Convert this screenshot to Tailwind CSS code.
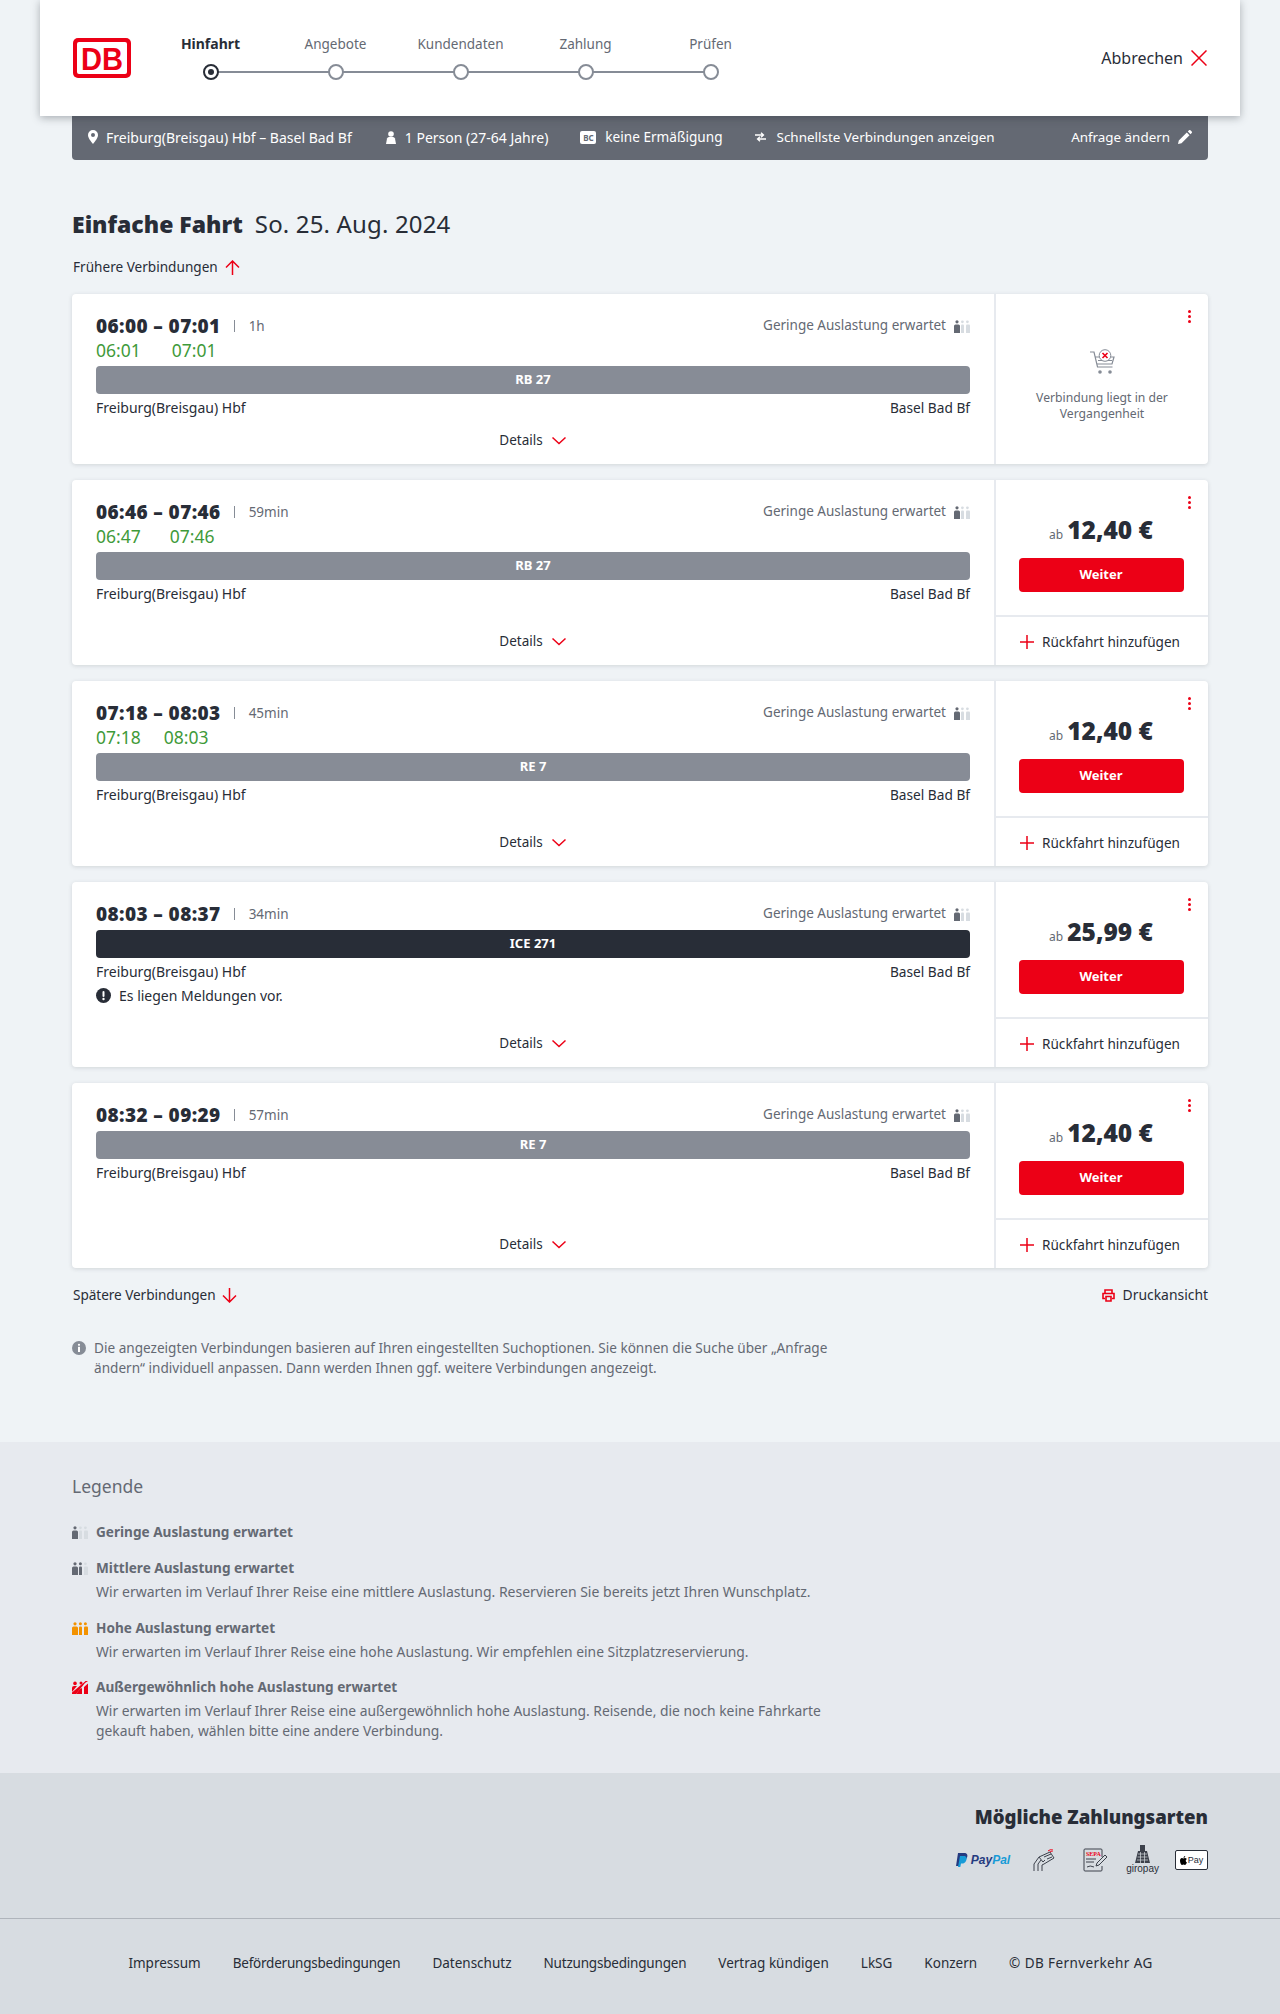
<!DOCTYPE html>
<html lang="de">
<head>
  <meta charset="UTF-8" />
  <title>Verbindungen</title>
  <script src="https://cdn.jsdelivr.net/npm/@tailwindcss/browser@4"></script>
</head>
<body class="bg-[#eff3f6] font-['Noto_Sans',sans-serif] text-[#282d37] text-[14px]">
  <!-- shared icons -->
  <svg class="hidden">
    <symbol id="occ1" viewBox="0 0 16 13"><circle cx="3" cy="1.8" r="1.6" fill="#646973"/><path d="M0 6a1.5 1.5 0 0 1 1.5-1.5h3A1.5 1.5 0 0 1 6 6v7H0z" fill="#646973"/><circle cx="8.4" cy="1.8" r="1.4" fill="#d7dce1"/><path d="M7 5.5a1 1 0 0 1 1-1h1a1 1 0 0 1 1 1V13H7z" fill="#d7dce1"/><circle cx="13.4" cy="1.8" r="1.4" fill="#d7dce1"/><path d="M12 5.5a1 1 0 0 1 1-1h2a1 1 0 0 1 1 1V13h-4z" fill="#d7dce1"/></symbol>
    <symbol id="occ2" viewBox="0 0 16 13"><circle cx="3" cy="1.8" r="1.6" fill="#646973"/><path d="M0 6a1.5 1.5 0 0 1 1.5-1.5h3A1.5 1.5 0 0 1 6 6v7H0z" fill="#646973"/><circle cx="8.4" cy="1.8" r="1.5" fill="#646973"/><path d="M7 5.5a1 1 0 0 1 1-1h1a1 1 0 0 1 1 1V13H7z" fill="#646973"/><circle cx="13.4" cy="1.8" r="1.4" fill="#d7dce1"/><path d="M12 5.5a1 1 0 0 1 1-1h2a1 1 0 0 1 1 1V13h-4z" fill="#d7dce1"/></symbol>
    <symbol id="occ3" viewBox="0 0 16 13"><g fill="#f39200"><circle cx="3" cy="1.8" r="1.6"/><path d="M0 6a1.5 1.5 0 0 1 1.5-1.5h3A1.5 1.5 0 0 1 6 6v7H0z"/><circle cx="8.4" cy="1.8" r="1.5"/><path d="M7 5.5a1 1 0 0 1 1-1h1a1 1 0 0 1 1 1V13H7z"/><circle cx="13.4" cy="1.8" r="1.5"/><path d="M12 5.5a1 1 0 0 1 1-1h2a1 1 0 0 1 1 1V13h-4z"/></g></symbol>
    <symbol id="occ4" viewBox="0 0 16 13"><g fill="#ec0016"><circle cx="3" cy="2.4" r="1.8"/><path d="M0 7a2 2 0 0 1 2-2h3L0 11z"/><path d="M0 13l4-.1 9-10.900 3-2-2.500 .1-1 .9L0 11.500z"/><circle cx="9" cy="2" r="1.500"/><path d="M4 13l4-5 2-1v6zM12 6l4-3.500V13h-4z"/></g></symbol>
    <symbol id="chev" viewBox="0 0 16 9"><path d="M1.500 1.500 8 7.500l6.500-6" fill="none" stroke="#ec0016" stroke-width="1.500"/></symbol>
    <symbol id="plus" viewBox="0 0 14 14"><path d="M7 0v14M0 7h14" stroke="#ec0016" stroke-width="1.500"/></symbol>
  </svg>

  <!-- header -->
  <header class="relative z-10 mx-[40px] h-[116px] bg-white shadow-[0_2px_8px_rgba(40,45,55,0.35)] flex items-center pl-[33px] pr-[33px]">
    <svg class="w-[58px] h-[40px] shrink-0" viewBox="0 0 58 40">
      <rect width="58" height="40" rx="5" fill="#ec0016"/>
      <rect x="4" y="4" width="50" height="32" rx="2" fill="#fff"/>
      <text x="29" y="31.500" text-anchor="middle" font-family="Liberation Sans" font-weight="700" font-size="32" fill="#ec0016" textLength="42" lengthAdjust="spacingAndGlyphs">DB</text>
    </svg>
    <div class="relative ml-[17px] w-[625px] h-[50px] flex text-[13.5px]">
      <div class="absolute left-[62px] right-[62px] top-[38px] h-[2px] bg-[#868c96]"></div>
      <div class="w-[125px] flex flex-col items-center pt-px gap-[10px] relative">
        <span class="h-[20px] leading-[20px] text-[14px] font-bold">Hinfahrt</span>
        <span class="w-[16px] h-[16px] rounded-full border-2 border-[#282d37] bg-white flex items-center justify-center"><span class="w-[6px] h-[6px] rounded-full bg-[#282d37]"></span></span>
      </div>
      <div class="w-[125px] flex flex-col items-center pt-px gap-[10px] relative text-[#646973]">
        <span class="h-[20px] leading-[20px]">Angebote</span>
        <span class="w-[16px] h-[16px] rounded-full border-2 border-[#868c96] bg-white"></span>
      </div>
      <div class="w-[125px] flex flex-col items-center pt-px gap-[10px] relative text-[#646973]">
        <span class="h-[20px] leading-[20px]">Kundendaten</span>
        <span class="w-[16px] h-[16px] rounded-full border-2 border-[#868c96] bg-white"></span>
      </div>
      <div class="w-[125px] flex flex-col items-center pt-px gap-[10px] relative text-[#646973]">
        <span class="h-[20px] leading-[20px]">Zahlung</span>
        <span class="w-[16px] h-[16px] rounded-full border-2 border-[#868c96] bg-white"></span>
      </div>
      <div class="w-[125px] flex flex-col items-center pt-px gap-[10px] relative text-[#646973]">
        <span class="h-[20px] leading-[20px]">Prüfen</span>
        <span class="w-[16px] h-[16px] rounded-full border-2 border-[#868c96] bg-white"></span>
      </div>
    </div>
    <div class="ml-auto flex items-center gap-[8px] text-[16px]">
      <span>Abbrechen</span>
      <svg class="w-[16px] h-[16px]" viewBox="0 0 16 16"><path d="M.5.500l15 15M15.500.500l-15 15" stroke="#ec0016" stroke-width="1.500"/></svg>
    </div>
  </header>

  <main class="px-[72px]">
    <!-- search summary -->
    <div class="h-[44px] pb-[2px] bg-[#646973] rounded-b-[4px] text-white flex items-center pl-[16px] pr-[16px]">
      <svg class="w-[10px] h-[14px] mr-[8px]" viewBox="0 0 10 14"><path fill-rule="evenodd" d="M5 0a5 5 0 0 1 5 5c0 3-3 6.500-5 9-2-2.500-5-6-5-9a5 5 0 0 1 5-5zm0 3a2 2 0 1 0 0 4 2 2 0 0 0 0-4z" fill="#fff"/></svg>
      <span>Freiburg(Breisgau) Hbf – Basel Bad Bf</span>
      <svg class="w-[12px] h-[13px] ml-[33px] mr-[8px]" viewBox="0 0 12 13"><circle cx="6" cy="3" r="2.800" fill="#fff"/><path d="M1 13l1-5.500Q2.500 6 4 6h4q1.500 0 2 1.500l1 5.500z" fill="#fff"/></svg>
      <span>1 Person (27-64 Jahre)</span>
      <span class="ml-[32px] mr-[9px] w-[16px] h-[13px] bg-white rounded-[2px] text-[#646973] text-[8px] font-bold leading-[13px] text-center">BC</span>
      <span class="text-[13.6px]">keine Ermäßigung</span>
      <svg class="w-[11px] h-[10px] ml-[32px] mr-[11px]" viewBox="0 0 11 10"><path d="M0 3h8M6 .8 8.500 3 6 5.200M11 7H3M5 4.800 2.500 7 5 9.200" fill="none" stroke="#fff" stroke-width="1.300"/></svg>
      <span class="text-[13.45px]">Schnellste Verbindungen anzeigen</span>
      <span class="ml-auto text-[13.4px]">Anfrage ändern</span>
      <svg class="w-[14px] h-[14px] ml-[8px]" viewBox="0 0 14 14"><path d="M0 14l.8-3.500 8-8 2.700 2.700-8 8zM9.800 1.500 11 .3a1 1 0 0 1 1.400 0l1.300 1.300a1 1 0 0 1 0 1.400l-1.200 1.200z" fill="#fff"/></svg>
    </div>

    <h1 class="mt-[48px] h-[32px] leading-[32px] text-[24px]"><span class="font-black text-[23px]">Einfache Fahrt</span><span class="ml-[12px] tracking-[0.15px]">So. 25. Aug. 2024</span></h1>

    <div class="mt-[17px] h-[20px] flex items-center gap-[7px] pl-px text-[13.6px]">
      <span>Frühere Verbindungen</span>
      <svg class="w-[15px] h-[15px]" viewBox="0 0 15 15"><path d="M7.500 15V1M1 7.500 7.500 1 14 7.500" fill="none" stroke="#ec0016" stroke-width="1.500"/></svg>
    </div>

    <div class="mt-[17px] flex flex-col gap-[16px]">
      <!-- card 1 -->
      <article class="relative h-[170px] bg-white rounded-[4px] shadow-[0_1px_4px_rgba(40,45,55,0.15)] flex">
        <div class="flex-1 flex flex-col px-[24px] pt-[20px]">
          <div class="flex items-center h-[24px]">
            <span class="font-black text-[19px] tracking-[0.4px]">06:00 – 07:01</span>
            <span class="ml-[13px] w-px h-[12px] bg-[#868c96]"></span>
            <span class="ml-[14px] text-[#646973] text-[13.5px]">1h</span>
            <span class="ml-auto pb-[1px] text-[#646973] text-[13.5px]">Geringe Auslastung erwartet</span>
            <svg class="w-[16px] h-[13px] ml-[8px]"><use href="#occ1"/></svg>
          </div>
          <div class="h-[24px] leading-[24px] text-[17.5px] text-[#3f9a3a] flex"><span>06:01</span><span class="ml-[31px]">07:01</span></div>
          <div class="mt-[4px] h-[28px] rounded-[4px] bg-[#878c96] text-white text-[13px] font-bold flex items-center justify-center">RB 27</div>
          <div class="mt-[4px] h-[20px] leading-[20px] flex justify-between"><span>Freiburg(Breisgau) Hbf</span><span class="text-[13.7px]">Basel Bad Bf</span></div>
          <div class="mt-auto h-[46px] pb-[1px] flex items-center justify-center gap-[8px] text-[13.5px]"><span>Details</span><svg class="w-[16px] h-[9px]"><use href="#chev"/></svg></div>
        </div>
        <div class="w-[214px] border-l-2 border-[#e7eaef] flex flex-col items-center pt-[55px] text-center text-[#646973] text-[12.2px] leading-[16px]">
          <svg class="w-[26px] h-[26px] mb-[15px]" viewBox="0 0 26 26">
            <path d="M1 3h4l3.500 15h15" fill="none" stroke="#868c96" stroke-width="1.200"/>
            <path d="M6 8h19l-2 7H8M9 11.500h14" fill="none" stroke="#868c96" stroke-width="1.200"/>
            <circle cx="11" cy="23" r="1.800" fill="#868c96"/><circle cx="21" cy="23" r="1.800" fill="#868c96"/>
            <circle cx="16" cy="6.500" r="5.800" fill="#fff" stroke="#868c96"/>
            <path d="M13.500 4l5 5M18.500 4l-5 5" stroke="#ec0016" stroke-width="1.600"/>
          </svg>
          <span>Verbindung liegt in der<br>Vergangenheit</span>
        </div>
        <div class="absolute right-[17px] top-[16px] flex flex-col gap-[2px]"><i class="w-[3px] h-[3px] rounded-full bg-[#ec0016]"></i><i class="w-[3px] h-[3px] rounded-full bg-[#ec0016]"></i><i class="w-[3px] h-[3px] rounded-full bg-[#ec0016]"></i></div>
      </article>

      <!-- card 2 -->
      <article class="relative h-[185px] bg-white rounded-[4px] shadow-[0_1px_4px_rgba(40,45,55,0.15)] flex">
        <div class="flex-1 flex flex-col px-[24px] pt-[20px]">
          <div class="flex items-center h-[24px]">
            <span class="font-black text-[19px] tracking-[0.4px]">06:46 – 07:46</span>
            <span class="ml-[13px] w-px h-[12px] bg-[#868c96]"></span>
            <span class="ml-[14px] text-[#646973] text-[13.5px]">59min</span>
            <span class="ml-auto pb-[1px] text-[#646973] text-[13.5px]">Geringe Auslastung erwartet</span>
            <svg class="w-[16px] h-[13px] ml-[8px]"><use href="#occ1"/></svg>
          </div>
          <div class="h-[24px] leading-[24px] text-[17.5px] text-[#3f9a3a] flex"><span>06:47</span><span class="ml-[29px]">07:46</span></div>
          <div class="mt-[4px] h-[28px] rounded-[4px] bg-[#878c96] text-white text-[13px] font-bold flex items-center justify-center">RB 27</div>
          <div class="mt-[4px] h-[20px] leading-[20px] flex justify-between"><span>Freiburg(Breisgau) Hbf</span><span class="text-[13.7px]">Basel Bad Bf</span></div>
          <div class="mt-auto h-[46px] pb-[1px] flex items-center justify-center gap-[8px] text-[13.5px]"><span>Details</span><svg class="w-[16px] h-[9px]"><use href="#chev"/></svg></div>
        </div>
        <div class="w-[214px] border-l-2 border-[#e7eaef] flex flex-col">
          <div class="h-[137px] pr-[2px] border-b-2 border-[#e7eaef] flex flex-col items-center pt-[32px]">
            <div class="h-[36px] flex items-baseline gap-[4px]"><span class="text-[12px] text-[#646973]">ab</span><span class="font-black text-[24.500px] leading-[36px]">12,40 €</span></div>
            <div class="mt-[10px] w-[165px] h-[34px] rounded-[4px] bg-[#ec0016] text-white text-[13px] font-bold flex items-center justify-center">Weiter</div>
          </div>
          <div class="flex-1 flex items-center pl-[24px] pt-[2px] gap-[8px] text-[13.6px]"><svg class="w-[14px] h-[14px]"><use href="#plus"/></svg><span>Rückfahrt hinzufügen</span></div>
        </div>
        <div class="absolute right-[17px] top-[16px] flex flex-col gap-[2px]"><i class="w-[3px] h-[3px] rounded-full bg-[#ec0016]"></i><i class="w-[3px] h-[3px] rounded-full bg-[#ec0016]"></i><i class="w-[3px] h-[3px] rounded-full bg-[#ec0016]"></i></div>
      </article>

      <!-- card 3 -->
      <article class="relative h-[185px] bg-white rounded-[4px] shadow-[0_1px_4px_rgba(40,45,55,0.15)] flex">
        <div class="flex-1 flex flex-col px-[24px] pt-[20px]">
          <div class="flex items-center h-[24px]">
            <span class="font-black text-[19px] tracking-[0.4px]">07:18 – 08:03</span>
            <span class="ml-[13px] w-px h-[12px] bg-[#868c96]"></span>
            <span class="ml-[14px] text-[#646973] text-[13.5px]">45min</span>
            <span class="ml-auto pb-[1px] text-[#646973] text-[13.5px]">Geringe Auslastung erwartet</span>
            <svg class="w-[16px] h-[13px] ml-[8px]"><use href="#occ1"/></svg>
          </div>
          <div class="h-[24px] leading-[24px] text-[17.5px] text-[#3f9a3a] flex"><span>07:18</span><span class="ml-[23px]">08:03</span></div>
          <div class="mt-[4px] h-[28px] rounded-[4px] bg-[#878c96] text-white text-[13px] font-bold flex items-center justify-center">RE 7</div>
          <div class="mt-[4px] h-[20px] leading-[20px] flex justify-between"><span>Freiburg(Breisgau) Hbf</span><span class="text-[13.7px]">Basel Bad Bf</span></div>
          <div class="mt-auto h-[46px] pb-[1px] flex items-center justify-center gap-[8px] text-[13.5px]"><span>Details</span><svg class="w-[16px] h-[9px]"><use href="#chev"/></svg></div>
        </div>
        <div class="w-[214px] border-l-2 border-[#e7eaef] flex flex-col">
          <div class="h-[137px] pr-[2px] border-b-2 border-[#e7eaef] flex flex-col items-center pt-[32px]">
            <div class="h-[36px] flex items-baseline gap-[4px]"><span class="text-[12px] text-[#646973]">ab</span><span class="font-black text-[24.500px] leading-[36px]">12,40 €</span></div>
            <div class="mt-[10px] w-[165px] h-[34px] rounded-[4px] bg-[#ec0016] text-white text-[13px] font-bold flex items-center justify-center">Weiter</div>
          </div>
          <div class="flex-1 flex items-center pl-[24px] pt-[2px] gap-[8px] text-[13.6px]"><svg class="w-[14px] h-[14px]"><use href="#plus"/></svg><span>Rückfahrt hinzufügen</span></div>
        </div>
        <div class="absolute right-[17px] top-[16px] flex flex-col gap-[2px]"><i class="w-[3px] h-[3px] rounded-full bg-[#ec0016]"></i><i class="w-[3px] h-[3px] rounded-full bg-[#ec0016]"></i><i class="w-[3px] h-[3px] rounded-full bg-[#ec0016]"></i></div>
      </article>

      <!-- card 4 -->
      <article class="relative h-[185px] bg-white rounded-[4px] shadow-[0_1px_4px_rgba(40,45,55,0.15)] flex">
        <div class="flex-1 flex flex-col px-[24px] pt-[20px]">
          <div class="flex items-center h-[24px]">
            <span class="font-black text-[19px] tracking-[0.4px]">08:03 – 08:37</span>
            <span class="ml-[13px] w-px h-[12px] bg-[#868c96]"></span>
            <span class="ml-[14px] text-[#646973] text-[13.5px]">34min</span>
            <span class="ml-auto pb-[1px] text-[#646973] text-[13.5px]">Geringe Auslastung erwartet</span>
            <svg class="w-[16px] h-[13px] ml-[8px]"><use href="#occ1"/></svg>
          </div>
          <div class="mt-[4px] h-[28px] rounded-[4px] bg-[#282d37] text-white text-[13px] font-bold flex items-center justify-center">ICE 271</div>
          <div class="mt-[4px] h-[20px] leading-[20px] flex justify-between"><span>Freiburg(Breisgau) Hbf</span><span class="text-[13.7px]">Basel Bad Bf</span></div>
          <div class="mt-[3px] h-[20px] flex items-center gap-[8px]">
            <svg class="w-[15px] h-[15px]" viewBox="0 0 15 15"><circle cx="7.500" cy="7.500" r="7.500" fill="#282d37"/><rect x="6.500" y="3" width="2" height="6" rx="1" fill="#fff"/><circle cx="7.500" cy="11" r="1.200" fill="#fff"/></svg>
            <span>Es liegen Meldungen vor.</span>
          </div>
          <div class="mt-auto h-[46px] pb-[1px] flex items-center justify-center gap-[8px] text-[13.5px]"><span>Details</span><svg class="w-[16px] h-[9px]"><use href="#chev"/></svg></div>
        </div>
        <div class="w-[214px] border-l-2 border-[#e7eaef] flex flex-col">
          <div class="h-[137px] pr-[2px] border-b-2 border-[#e7eaef] flex flex-col items-center pt-[32px]">
            <div class="h-[36px] flex items-baseline gap-[4px]"><span class="text-[12px] text-[#646973]">ab</span><span class="font-black text-[24.500px] leading-[36px]">25,99 €</span></div>
            <div class="mt-[10px] w-[165px] h-[34px] rounded-[4px] bg-[#ec0016] text-white text-[13px] font-bold flex items-center justify-center">Weiter</div>
          </div>
          <div class="flex-1 flex items-center pl-[24px] pt-[2px] gap-[8px] text-[13.6px]"><svg class="w-[14px] h-[14px]"><use href="#plus"/></svg><span>Rückfahrt hinzufügen</span></div>
        </div>
        <div class="absolute right-[17px] top-[16px] flex flex-col gap-[2px]"><i class="w-[3px] h-[3px] rounded-full bg-[#ec0016]"></i><i class="w-[3px] h-[3px] rounded-full bg-[#ec0016]"></i><i class="w-[3px] h-[3px] rounded-full bg-[#ec0016]"></i></div>
      </article>

      <!-- card 5 -->
      <article class="relative h-[185px] bg-white rounded-[4px] shadow-[0_1px_4px_rgba(40,45,55,0.15)] flex">
        <div class="flex-1 flex flex-col px-[24px] pt-[20px]">
          <div class="flex items-center h-[24px]">
            <span class="font-black text-[19px] tracking-[0.4px]">08:32 – 09:29</span>
            <span class="ml-[13px] w-px h-[12px] bg-[#868c96]"></span>
            <span class="ml-[14px] text-[#646973] text-[13.5px]">57min</span>
            <span class="ml-auto pb-[1px] text-[#646973] text-[13.5px]">Geringe Auslastung erwartet</span>
            <svg class="w-[16px] h-[13px] ml-[8px]"><use href="#occ1"/></svg>
          </div>
          <div class="mt-[4px] h-[28px] rounded-[4px] bg-[#878c96] text-white text-[13px] font-bold flex items-center justify-center">RE 7</div>
          <div class="mt-[4px] h-[20px] leading-[20px] flex justify-between"><span>Freiburg(Breisgau) Hbf</span><span class="text-[13.7px]">Basel Bad Bf</span></div>
          <div class="mt-auto h-[46px] pb-[1px] flex items-center justify-center gap-[8px] text-[13.5px]"><span>Details</span><svg class="w-[16px] h-[9px]"><use href="#chev"/></svg></div>
        </div>
        <div class="w-[214px] border-l-2 border-[#e7eaef] flex flex-col">
          <div class="h-[137px] pr-[2px] border-b-2 border-[#e7eaef] flex flex-col items-center pt-[32px]">
            <div class="h-[36px] flex items-baseline gap-[4px]"><span class="text-[12px] text-[#646973]">ab</span><span class="font-black text-[24.500px] leading-[36px]">12,40 €</span></div>
            <div class="mt-[10px] w-[165px] h-[34px] rounded-[4px] bg-[#ec0016] text-white text-[13px] font-bold flex items-center justify-center">Weiter</div>
          </div>
          <div class="flex-1 flex items-center pl-[24px] pt-[2px] gap-[8px] text-[13.6px]"><svg class="w-[14px] h-[14px]"><use href="#plus"/></svg><span>Rückfahrt hinzufügen</span></div>
        </div>
        <div class="absolute right-[17px] top-[16px] flex flex-col gap-[2px]"><i class="w-[3px] h-[3px] rounded-full bg-[#ec0016]"></i><i class="w-[3px] h-[3px] rounded-full bg-[#ec0016]"></i><i class="w-[3px] h-[3px] rounded-full bg-[#ec0016]"></i></div>
      </article>
    </div>

    <div class="mt-[17px] h-[20px] flex items-center pl-px text-[13.6px]">
      <span class="tracking-[-0.05px]">Spätere Verbindungen</span>
      <svg class="ml-[6px] w-[15px] h-[15px]" viewBox="0 0 15 15"><path d="M7.500 0v14M1 7.500 7.500 14 14 7.500" fill="none" stroke="#ec0016" stroke-width="1.500"/></svg>
      <svg class="ml-auto w-[13px] h-[13px]" viewBox="0 0 13 13"><path d="M3 4V1h7v3M3 9.500H1V4.500h11v5h-2M4 7.500h5V12H4z" fill="none" stroke="#ec0016" stroke-width="1.600"/></svg>
      <span class="ml-[8px] text-[13.9px]">Druckansicht</span>
    </div>

    <div class="mt-[33px] flex gap-[8px] w-[770px] text-[#646973] text-[13.6px] leading-[20px]">
      <svg class="w-[14px] h-[14px] mt-[3px] shrink-0" viewBox="0 0 14 14"><circle cx="7" cy="7" r="7" fill="#868c96"/><circle cx="7" cy="3.800" r="1.100" fill="#fff"/><rect x="6" y="5.800" width="2" height="5.200" fill="#fff"/></svg>
      <p>Die angezeigten Verbindungen basieren auf Ihren eingestellten Suchoptionen. Sie können die Suche über „Anfrage ändern“ individuell anpassen. Dann werden Ihnen ggf. weitere Verbindungen angezeigt.</p>
    </div>
  </main>

  <!-- legend -->
  <section class="mt-[64px] h-[331px] bg-[#e7eaef] px-[72px] pt-[32px] text-[#646973]">
    <h2 class="h-[24px] leading-[24px] text-[17.5px]">Legende</h2>
    <div class="mt-[24px] flex gap-[8px] h-[20px] items-center text-[13.6px]"><svg class="w-[16px] h-[13px]"><use href="#occ1"/></svg><b>Geringe Auslastung erwartet</b></div>
    <div class="mt-[16px] flex gap-[8px] h-[20px] items-center text-[13.6px]"><svg class="w-[16px] h-[13px]"><use href="#occ2"/></svg><b>Mittlere Auslastung erwartet</b></div>
    <p class="ml-[24px] mt-[4px] leading-[20px]">Wir erwarten im Verlauf Ihrer Reise eine mittlere Auslastung. Reservieren Sie bereits jetzt Ihren Wunschplatz.</p>
    <div class="mt-[16px] flex gap-[8px] h-[20px] items-center text-[13.6px]"><svg class="w-[16px] h-[13px]"><use href="#occ3"/></svg><b>Hohe Auslastung erwartet</b></div>
    <p class="ml-[24px] mt-[4px] leading-[20px] text-[13.85px]">Wir erwarten im Verlauf Ihrer Reise eine hohe Auslastung. Wir empfehlen eine Sitzplatzreservierung.</p>
    <div class="mt-[15px] flex gap-[8px] h-[20px] items-center text-[13.6px]"><svg class="w-[16px] h-[13px]"><use href="#occ4"/></svg><b>Außergewöhnlich hohe Auslastung erwartet</b></div>
    <p class="ml-[24px] mt-[4px] leading-[20px] w-[760px] text-[13.85px]">Wir erwarten im Verlauf Ihrer Reise eine außergewöhnlich hohe Auslastung. Reisende, die noch keine Fahrkarte gekauft haben, wählen bitte eine andere Verbindung.</p>
  </section>

  <!-- payment + footer -->
  <section class="h-[146px] bg-[#d7dce1] px-[72px] pt-[31px] border-b border-[#afb4bb] flex flex-col items-end">
    <h2 class="h-[26px] leading-[26px] text-[18.600px] font-black">Mögliche Zahlungsarten</h2>
    <div class="mt-[14px] h-[32px] flex items-center">
      <div class="flex items-center gap-[3px]">
        <svg class="w-[12px] h-[14px]" viewBox="0 0 12 14"><path d="M2 0h6c3 0 4 2 3 4.500C10 7 8 8 6 8H4.500L3.500 13H0z" fill="#253b80"/><path d="M4 3h5c2 1 2 3 1 5-1 2-2.500 2.500-4 2.500H5L4.300 14H2z" fill="#179bd7"/></svg>
        <span class="font-['Liberation_Sans',sans-serif] font-bold italic text-[12px] leading-none text-[#253b80]">Pay<span class="text-[#179bd7]">Pal</span></span>
      </div>
      <svg class="ml-[22px] w-[24px] h-[24px]" viewBox="0 0 24 24" fill="none" stroke="#3c414b">
        <path d="M2 23v-7l5-7 11-5 4 6-10 6-2 1v6"/>
        <path d="M7 9l4 5 2-2M9 12l-3 4v7"/>
        <path d="M12 9l7-3M15 11l5-2"/>
        <path d="M16 3q2-2 5-1M18 4q1.500-1 2.500-.5" stroke="#ec0016"/>
      </svg>
      <svg class="ml-[27px] w-[25px] h-[24px]" viewBox="0 0 25 24" fill="none" stroke="#3c414b">
        <path d="M19 9V2a1 1 0 0 0-1-1H2a1 1 0 0 0-1 1v20a1 1 0 0 0 1 1h16a1 1 0 0 0 1-1v-4"/>
        <text x="3" y="8" font-family="Liberation Serif" font-weight="700" font-size="6" fill="#ec0016" stroke="none">SEPA</text>
        <path d="M3 11h10M3 14h8M4 19q3-2 7 0"/><path d="M13 18l1-3 8-8 2 2-8 8z" fill="#d7dce1"/>
      </svg>
      <div class="ml-[18px] flex flex-col items-center">
        <svg class="w-[15px] h-[18px]" viewBox="0 0 15 18"><path d="M5 0h5v6h2l3 12H0L3 6h2z" fill="#3c414b"/><path d="M3 9h9M2.500 12h10M2 15h11M5.500 7v11M9.500 7v11" stroke="#d7dce1" stroke-width=".7"/></svg>
        <span class="text-[10px] leading-[12px] text-[#282d37] font-['Liberation_Sans',sans-serif]">giropay</span>
      </div>
      <span class="ml-[16px] w-[33px] h-[20px] border border-[#282d37] bg-white rounded-[2px] flex items-center justify-center gap-px text-[9px] leading-none font-['Liberation_Sans',sans-serif]">
        <svg class="w-[7px] h-[9px]" viewBox="0 0 7 9"><path d="M5.200 0C4.300.1 3.500.9 3.600 1.900 4.500 1.900 5.300 1 5.200 0zM3.500 2.400C3 2.400 2.500 2 1.900 2 .9 2 0 3 0 4.700 0 6.700 1.200 9 2.100 9c.5 0 .8-.4 1.400-.4s.9.400 1.400.4c.9 0 1.700-1.500 2-2.400-1.500-.7-1.600-2.900 0-3.600C6.400 2.300 5.600 2 5 2c-.7 0-1.100.4-1.500.4z" fill="#000"/></svg>Pay
      </span>
    </div>
  </section>
  <footer class="h-[96px] pb-[8px] pl-px bg-[#d7dce1] text-[13.5px] flex items-center justify-center gap-[32px]">
    <span>Impressum</span>
    <span class="tracking-[-0.22px]">Beförderungsbedingungen</span>
    <span>Datenschutz</span>
    <span class="tracking-[-0.2px]">Nutzungsbedingungen</span>
    <span>Vertrag kündigen</span>
    <span>LkSG</span>
    <span>Konzern</span>
    <span class="tracking-[0.4px]">© DB Fernverkehr AG</span>
  </footer>
</body>
</html>
